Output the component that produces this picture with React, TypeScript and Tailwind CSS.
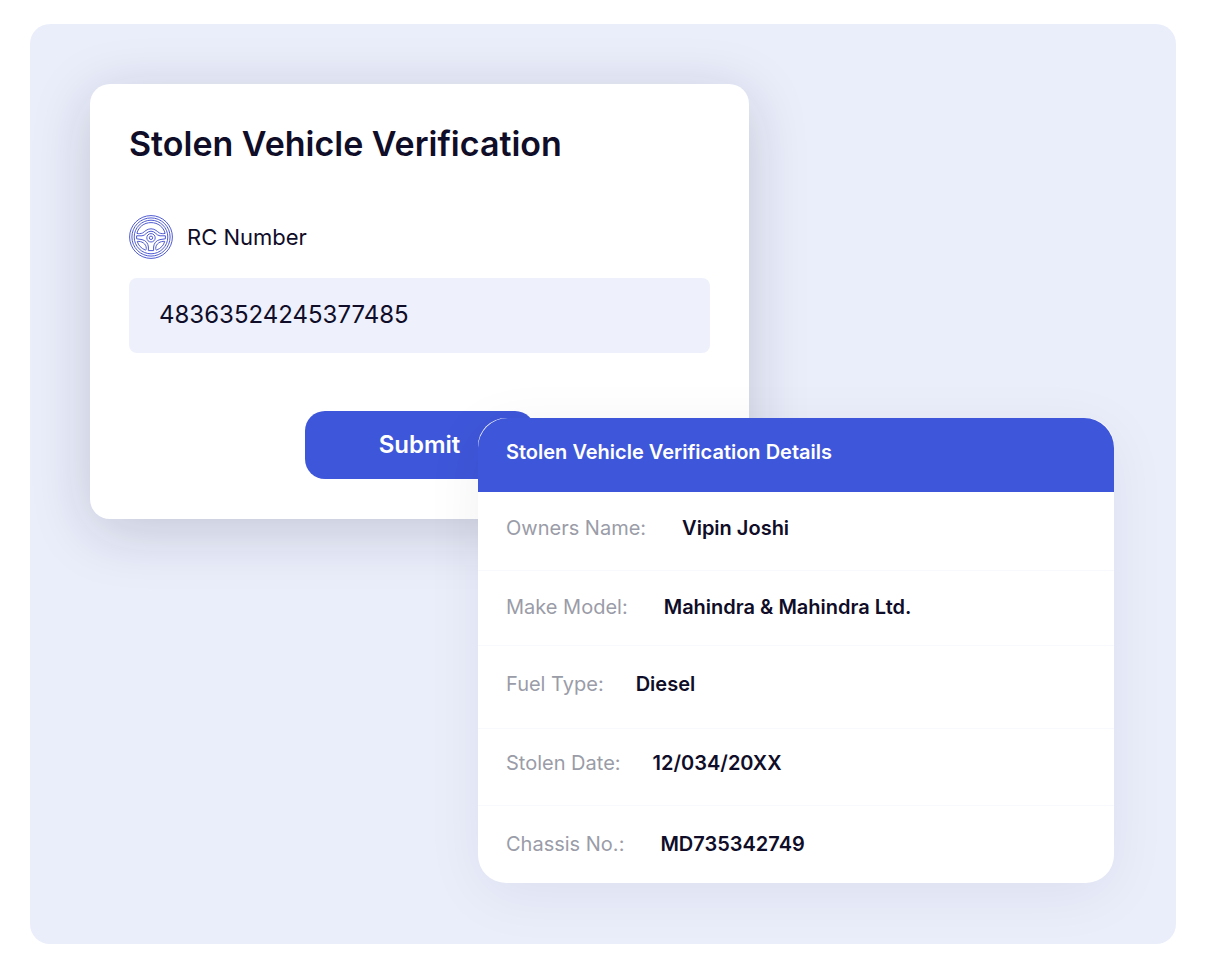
type Detail = {
  label: string;
  value: string;
  row: string;
};

const details: Detail[] = [
  { label: "Owners Name:", value: "Vipin Joshi", row: "h-[79px] pt-6 gap-9" },
  {
    label: "Make Model:",
    value: "Mahindra & Mahindra Ltd.",
    row: "h-[75px] pt-6 gap-9",
  },
  { label: "Fuel Type:", value: "Diesel", row: "h-[83px] pt-[26px] gap-8" },
  {
    label: "Stolen Date:",
    value: "12/034/20XX",
    row: "h-[77px] pt-[22px] gap-8",
  },
  {
    label: "Chassis No.:",
    value: "MD735342749",
    row: "h-[77px] pt-[26px] gap-9",
  },
];

function SteeringWheel() {
  return (
    <svg
      viewBox="0 0 44 44"
      className="size-11 shrink-0"
      fill="none"
      stroke="#4f5bd2"
      strokeLinejoin="round"
      aria-hidden="true"
    >
      <circle cx="22" cy="22" r="21.4" />
      <circle cx="22" cy="22" r="19.1" />
      <circle cx="22" cy="22" r="16.8" />
      {/* upper opening */}
      <path d="M7.900 18.400C9.400 12 15 7.600 22 7.600S34.600 12 36.100 18.400C34.500 18.900 32 18.700 30.500 18C28 16.700 26.500 13.800 22 13.800S16 16.700 13.500 18C12 18.700 9.500 18.900 7.900 18.400Z" />
      {/* spokes */}
      <path d="M7.600 20.800H13C16.500 20.800 17.500 16.200 22 16.200S27.500 20.800 31 20.800H36.400V23.800L31 24.600C27 25.400 24.900 28.500 24.600 32V35.600H19.400V32C19.100 28.500 17 25.400 13 24.600L7.600 23.800Z" />
      {/* lower openings */}
      <path d="M8.300 26.400C12.500 26 17.300 28.500 17.300 33.500C17.300 34.800 16.900 35.300 16 34.900C12.200 33.300 9.200 30.300 8.300 26.400Z" />
      <path d="M35.700 26.400C31.500 26 26.700 28.500 26.700 33.500C26.700 34.800 27.100 35.300 28 34.900C31.800 33.300 34.800 30.300 35.700 26.400Z" />
      <circle cx="22" cy="22.800" r="4.200" />
      <circle cx="22" cy="22.800" r="1.700" />
    </svg>
  );
}

function VerificationForm() {
  return (
    <form
      className="flex w-[659px] max-w-full flex-col rounded-[20px] bg-white px-[39px] pt-10 pb-10 shadow-[0_12px_60px_rgba(20,20,45,0.18)]"
      onSubmit={(e) => e.preventDefault()}
    >
      <h1 className="text-[34px] leading-10 font-semibold">
        Stolen Vehicle Verification
      </h1>
      <label
        htmlFor="rc"
        className="mt-[51px] flex items-center gap-[14px] text-[22px]"
      >
        <SteeringWheel />
        RC Number
      </label>
      <input
        id="rc"
        type="text"
        defaultValue="48363524245377485"
        className="mt-[19px] h-[75px] w-full rounded-lg bg-[#eef1fc] px-[30px] pb-[2px] text-2xl outline-none"
      />
      <button
        type="submit"
        className="mt-[58px] h-[68px] w-[230px] self-center rounded-[20px] bg-[#3e56d9] text-2xl font-semibold text-white"
      >
        Submit
      </button>
    </form>
  );
}

function DetailsCard() {
  return (
    <section className="relative -mt-[101px] ml-auto w-[636px] max-w-full rounded-[28px] bg-white shadow-[0_12px_60px_rgba(20,20,45,0.06)]">
      {/* slightly rounder than the card, so a white hairline shows over the button */}
      <h2 className="h-[74px] rounded-t-[30px] bg-[#3e56d9] px-7 pt-5 text-xl leading-7 font-semibold text-white">
        Stolen Vehicle Verification Details
      </h2>
      <dl className="divide-y divide-[#f8f9fc] text-xl leading-6">
        {details.map(({ label, value, row }) => (
          <div key={label} className={`flex px-7 ${row}`}>
            <dt className="text-[#9a9ca8]">{label}</dt>
            <dd className="font-semibold">{value}</dd>
          </div>
        ))}
      </dl>
    </section>
  );
}

export default function App() {
  return (
    <main className="min-h-screen bg-white pt-6 pr-[29px] pb-9 pl-[30px] font-['Inter',sans-serif] text-[#0f0d28]">
      <div className="overflow-hidden rounded-[20px] bg-[#eaeefb] pt-[60px] pr-[62px] pb-[61px] pl-[60px]">
        <VerificationForm />
        <DetailsCard />
      </div>
    </main>
  );
}
